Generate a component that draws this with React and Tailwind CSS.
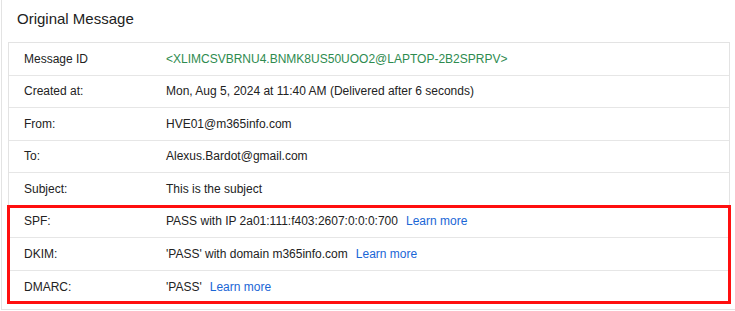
import React from "react";

const rows = [
  { label: "Message ID", value: <span className="text-[#2e8b4f]">&lt;XLIMCSVBRNU4.BNMK8US50UOO2@LAPTOP-2B2SPRPV&gt;</span> },
  { label: "Created at:", value: "Mon, Aug 5, 2024 at 11:40 AM (Delivered after 6 seconds)" },
  { label: "From:", value: "HVE01@m365info.com" },
  { label: "To:", value: "Alexus.Bardot@gmail.com" },
  { label: "Subject:", value: "This is the subject" },
];

const authRows = [
  { label: "SPF:", value: "PASS with IP 2a01:111:f403:2607:0:0:0:700" },
  { label: "DKIM:", value: "'PASS' with domain m365info.com" },
  { label: "DMARC:", value: "'PASS'" },
];

function Row({ label, children, last }) {
  return (
    <div className={`flex items-center h-[32.5px] ${last ? "" : "border-b border-[#e6e6e6]"}`}>
      <div className="w-[157px] pl-[15px] shrink-0">{label}</div>
      <div className="flex items-center">{children}</div>
    </div>
  );
}

export default function App() {
  return (
    <div
      className="w-[735px] h-[311px] bg-white overflow-hidden text-[12px] text-[#222]"
      style={{ fontFamily: "Arial, 'Liberation Sans', sans-serif" }}
    >
      <div className="h-[310px] ml-px border-l border-b border-[#e3e3e3] pl-[6px] pr-[5px]">
        <h2 className="h-[42px] pl-[9px] pt-[10px] text-[15px] leading-[18px] text-[#222]">Original Message</h2>

        <div className="w-[722px] border border-[#e3e3e3] border-b-0">
          {rows.map((r) => (
            <Row key={r.label} label={r.label}>
              {r.value}
            </Row>
          ))}

          {/* authentication results, boxed in red */}
          <div className="relative">
            {authRows.map((r, i) => (
              <Row key={r.label} label={r.label} last={i === authRows.length - 1}>
                <span>{r.value}</span>
                <a href="#" className="ml-[8px] text-[#1a66d6]">Learn more</a>
              </Row>
            ))}
            <div className="absolute -left-[2px] -right-[2px] -top-[1px] -bottom-[1px] border-[3px] border-[#ff0f0f] pointer-events-none" />
          </div>
        </div>
      </div>
    </div>
  );
}
